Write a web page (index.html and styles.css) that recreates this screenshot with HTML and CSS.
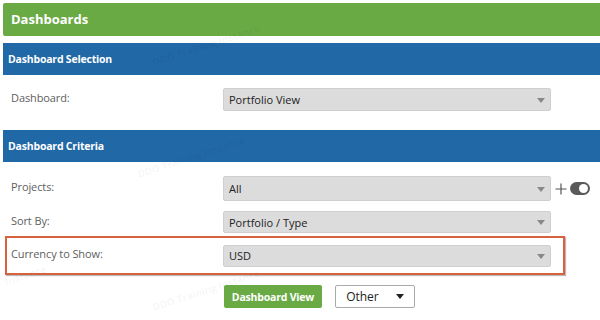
FILE: index.html
```html
<!DOCTYPE html>
<html lang="en">
<head>
<meta charset="UTF-8">
<title>Dashboards</title>
<link rel="stylesheet" href="styles.css">
</head>
<body>

<div class="page">
    <div class="page-title">Dashboards</div>

    <!-- Dashboard selection -->
    <div class="section-head">Dashboard Selection</div>
    <div class="section-body first">
        <div class="row">
            <div class="label">Dashboard:</div>
            <div class="select h23">Portfolio View<span class="caret"></span></div>
        </div>
    </div>

    <!-- Dashboard criteria -->
    <div class="section-head">Dashboard Criteria</div>
    <div class="section-body">
        <div class="row">
            <div class="label">Projects:</div>
            <div class="select h25">All<span class="caret"></span></div>
            <svg class="plus" width="12" height="12" viewBox="0 0 12 12"><path d="M6 0.5V11.5M0.5 6H11.5" stroke="#555" stroke-width="1.2"/></svg>
            <span class="toggle"></span>
        </div>
        <div class="row sort">
            <div class="label">Sort By:</div>
            <div class="select h22">Portfolio / Type<span class="caret"></span></div>
        </div>
        <div class="row highlight">
            <div class="label">Currency to Show:</div>
            <div class="select h22">USD<span class="caret"></span></div>
        </div>
        <div class="actions">
            <button class="btn btn-green">Dashboard View</button>
            <button class="btn btn-other">Other <span class="caret dark"></span></button>
        </div>
    </div>

    <!-- watermark -->
    <div class="mark m1">DDO Training Instance</div>
    <div class="mark m2">DDO Training Instance</div>
    <div class="mark m3">DDO Training Instance</div>
    <div class="mark m4">Instance</div>
</div>

</body>
</html>
```

FILE: styles.css
```css
body {
    margin: 0;
    font-family: "Open Sans", "Noto Sans", sans-serif;
    background: #fff;
    color: #555;
}

.page {
    position: relative;
    width: 600px;
    height: 320px;
    overflow: hidden;
    padding-left: 3px;
    box-sizing: border-box;
}

.page-title {
    margin-top: 3px;
    height: 33px;
    line-height: 33px;
    padding-left: 8px;
    background-color: #69aa45;
    color: #fff;
    font-size: 13px;
    font-weight: bold;
    border-radius: 2px 0 0 2px;
}

.section-head {
    margin-top: 7px;
    height: 32px;
    line-height: 32px;
    padding-left: 5px;
    background-color: #2068a6;
    color: #fff;
    font-size: 10.5px;
    letter-spacing: -0.2px;
    font-weight: bold;
}

.section-body {
    padding-top: 14px;
}

.section-body.first {
    padding-top: 13px;
    padding-bottom: 12px;
}

.row {
    display: flex;
    align-items: center;
}

.label {
    width: 212px;
    padding-left: 8px;
    font-size: 11px;
    letter-spacing: -0.1px;
    color: #606060;
    margin-top: -4px;
}

.select {
    position: relative;
    width: 328px;
    box-sizing: border-box;
    padding-left: 5px;
    background-color: #dcdcdc;
    border: 1px solid #cfcfcf;
    border-radius: 2px;
    font-size: 11px;
    color: #222;
    display: flex;
    align-items: center;
}

.h23 { height: 23px; }
.h25 { height: 25px; }
.h22 { height: 22px; }

.caret {
    position: absolute;
    right: 5px;
    top: 50%;
    margin-top: -2px;
    border-left: 4px solid transparent;
    border-right: 4px solid transparent;
    border-top: 5px solid #888;
}

.caret.dark {
    position: static;
    display: inline-block;
    margin: 0 0 2px 14px;
    border-top-color: #222;
}

.plus {
    margin-left: 4px;
}

.toggle {
    position: relative;
    margin-left: 3px;
    width: 20px;
    height: 13px;
    border-radius: 7px;
    background-color: #5a5a5a;
}

.toggle::after {
    content: "";
    position: absolute;
    right: 2px;
    top: 2px;
    width: 9px;
    height: 9px;
    border-radius: 50%;
    background: #fff;
}

.sort {
    margin-top: 10px;
}

.highlight {
    margin-top: 3px;
    margin-left: 2px;
    width: 560px;
    height: 39px;
    box-sizing: border-box;
    border: 2px solid #d9623e;
    box-shadow: 1px 1px 1px #bbb;
}

.highlight .label {
    width: 212px;
    padding-left: 4px;
}

.actions {
    display: flex;
    margin: 10px 0 0 221px;
    gap: 13px;
}

.btn {
    height: 23px;
    padding: 0;
    font-family: inherit;
    font-size: 11px;
    border-radius: 2px;
    white-space: nowrap;
    cursor: pointer;
}

.btn-green {
    width: 98px;
    background-color: #69aa45;
    border: none;
    color: #fff;
    font-weight: bold;
    font-size: 10.5px;
    letter-spacing: -0.2px;
}

.btn-other {
    width: 80px;
    background: #fff;
    border: 1px solid #aaa;
    color: #222;
    font-size: 12px;
}

.mark {
    position: absolute;
    font-size: 10px;
    font-weight: bold;
    color: rgba(0, 0, 0, 0.05);
    transform: rotate(-18deg);
    white-space: nowrap;
}

.m1 { left: 150px; top: 38px; }
.m2 { left: 135px; top: 150px; }
.m3 { left: 150px; top: 283px; }
.m4 { left: 4px; top: 268px; }
```
